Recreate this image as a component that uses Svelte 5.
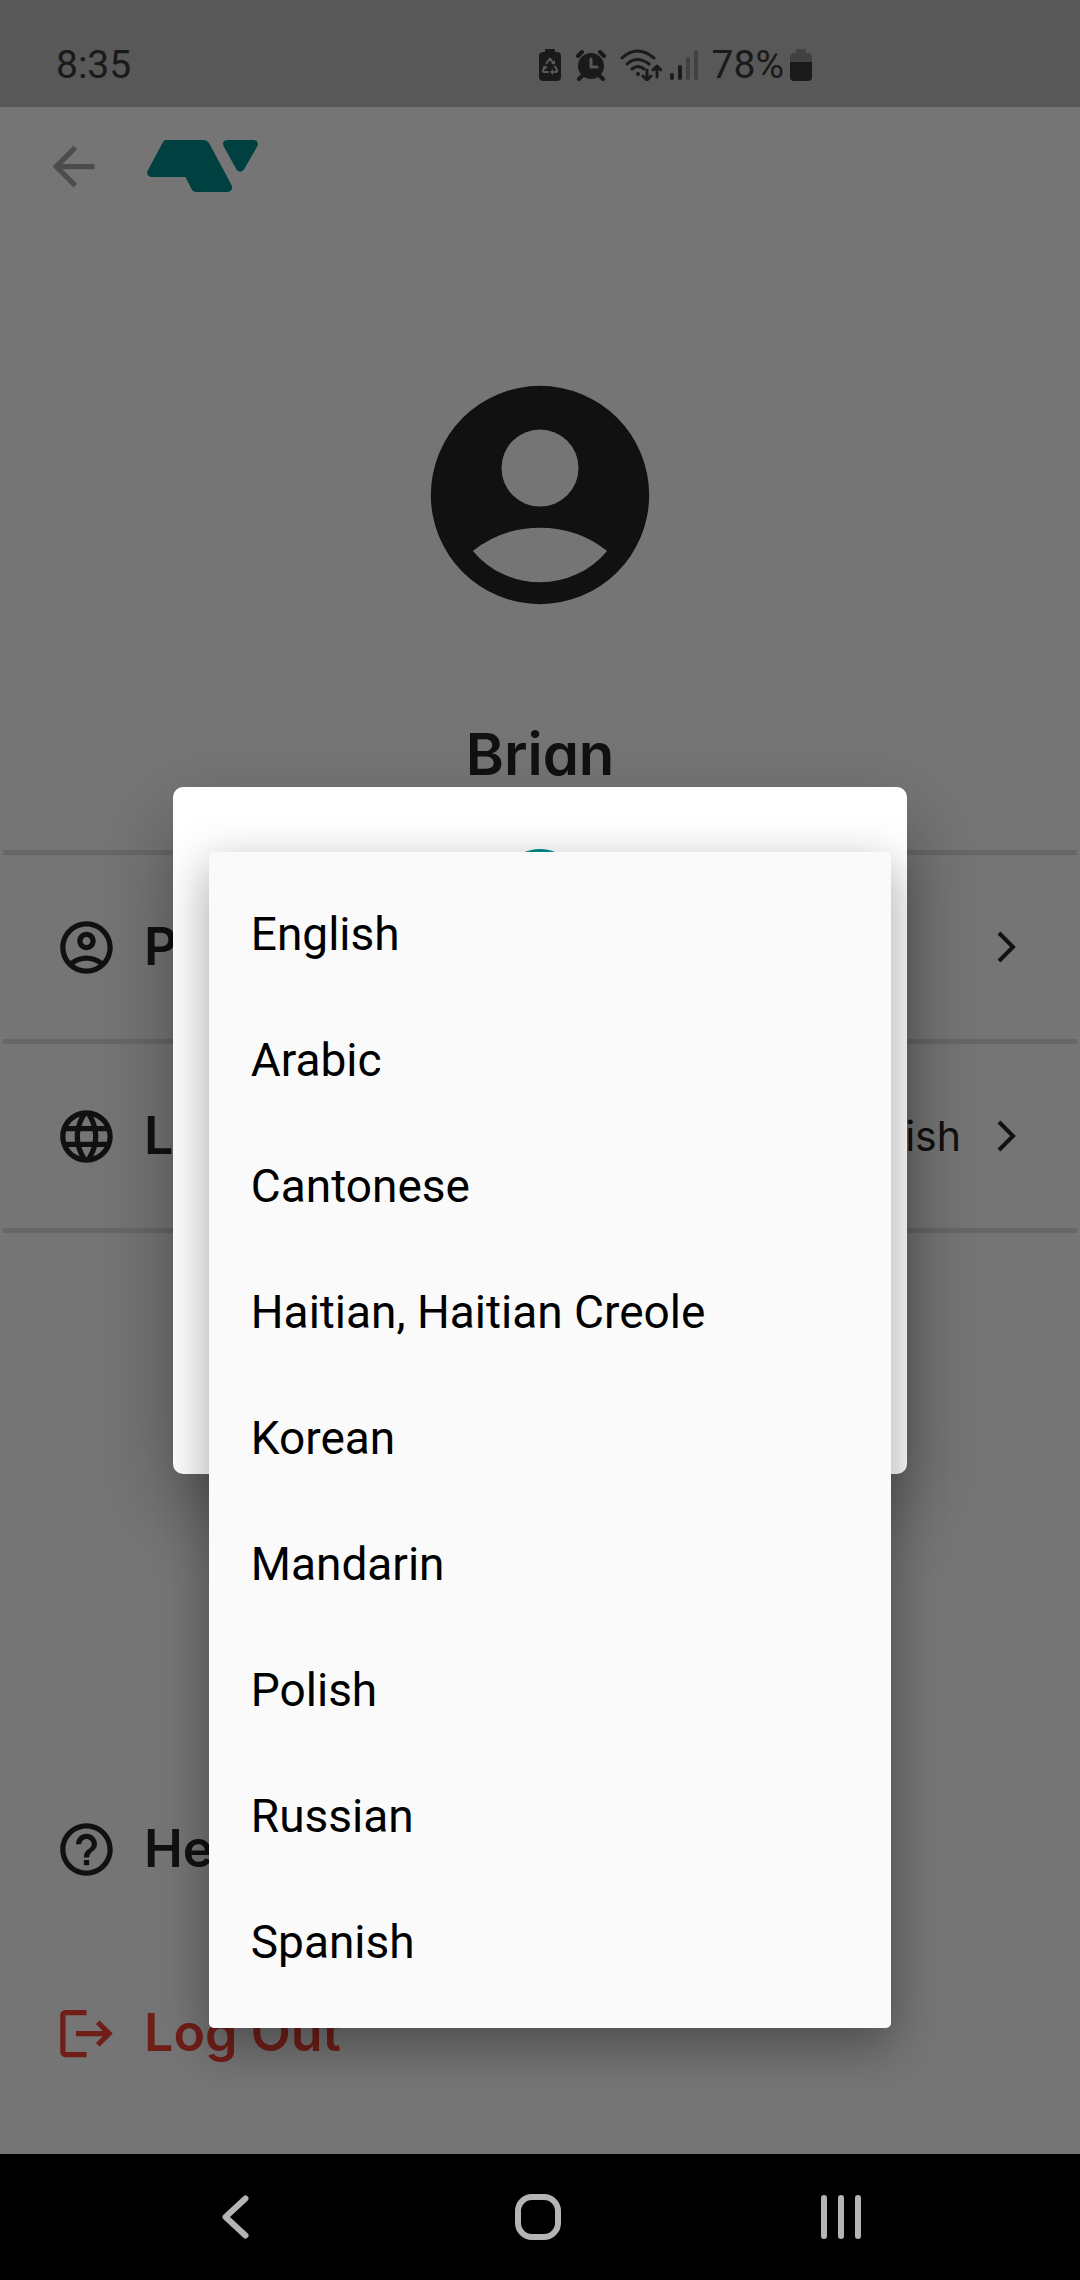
<script lang="ts">
  const languages = [
    'English',
    'Arabic',
    'Cantonese',
    'Haitian, Haitian Creole',
    'Korean',
    'Mandarin',
    'Polish',
    'Russian',
    'Spanish'
  ];

  let selected = $state('English');

  const icons = {
    back: 'M20 11H7.83l5.59-5.59L12 4l-8 8 8 8 1.41-1.41L7.83 13H20v-2z',
    profile:
      'M12 2C6.48 2 2 6.48 2 12s4.48 10 10 10 10-4.48 10-10S17.52 2 12 2zM7.35 18.5C8.66 17.56 10.26 17 12 17s3.34.56 4.65 1.5C15.34 19.44 13.74 20 12 20s-3.34-.56-4.65-1.5zm10.79-1.38C16.45 15.8 14.32 15 12 15s-4.45.8-6.14 2.12C4.7 15.73 4 13.95 4 12c0-4.42 3.58-8 8-8s8 3.58 8 8c0 1.95-.7 3.73-1.86 5.12zM12 6c-1.93 0-3.5 1.57-3.5 3.5S10.07 13 12 13s3.5-1.57 3.5-3.5S13.93 6 12 6zm0 5c-.83 0-1.5-.67-1.5-1.5S11.17 8 12 8s1.5.67 1.5 1.5S12.83 11 12 11z',
    globe:
      'M11.99 2C6.47 2 2 6.48 2 12s4.47 10 9.99 10C17.52 22 22 17.52 22 12S17.52 2 11.99 2zm6.93 6h-2.95c-.32-1.25-.78-2.45-1.38-3.56 1.84.63 3.37 1.91 4.33 3.56zM12 4.04c.83 1.2 1.48 2.53 1.91 3.96h-3.82c.43-1.43 1.08-2.76 1.91-3.96zM4.26 14C4.1 13.36 4 12.69 4 12s.1-1.36.26-2h3.38c-.08.66-.14 1.32-.14 2s.06 1.34.14 2H4.26zm.82 2h2.95c.32 1.25.78 2.45 1.38 3.56-1.84-.63-3.37-1.9-4.33-3.56zm2.95-8H5.08c.96-1.66 2.49-2.93 4.33-3.56C8.81 5.55 8.35 6.75 8.03 8zM12 19.96c-.83-1.2-1.48-2.53-1.91-3.96h3.82c-.43 1.43-1.08 2.76-1.91 3.96zM14.34 14H9.66c-.09-.66-.16-1.32-.16-2s.07-1.35.16-2h4.68c.09.65.16 1.32.16 2s-.07 1.34-.16 2zm.25 5.56c.6-1.11 1.06-2.31 1.38-3.56h2.95c-.96 1.65-2.49 2.93-4.33 3.56zM16.36 14c.08-.66.14-1.32.14-2s-.06-1.34-.14-2h3.38c.16.64.26 1.31.26 2s-.1 1.36-.26 2h-3.38z',
    help:
      'M11 18h2v-2h-2v2zm1-16C6.48 2 2 6.48 2 12s4.48 10 10 10 10-4.48 10-10S17.52 2 12 2zm0 18c-4.41 0-8-3.59-8-8s3.59-8 8-8 8 3.59 8 8-3.59 8-8 8zm0-14c-2.21 0-4 1.79-4 4h2c0-1.1.9-2 2-2s2 .9 2 2c0 2-3 1.75-3 5h2c0-2.25 3-2.5 3-5 0-2.21-1.79-4-4-4z',
    logout:
      'M17 7l-1.41 1.41L18.17 11H8v2h10.17l-2.58 2.58L17 17l5-5zM4 5h8V3H4c-1.1 0-2 .9-2 2v14c0 1.1.9 2 2 2h8v-2H4V5z'
  };
</script>

{#snippet icon(path: string)}
  <svg class="icon" viewBox="0 0 24 24" aria-hidden="true"><path d={path} /></svg>
{/snippet}

{#snippet chevron()}
  <svg class="chevron" viewBox="0 0 20 32" aria-hidden="true"><path d="M2 2l14 14L2 30" /></svg>
{/snippet}

<div class="phone">
  <div class="screen">
    <div class="status-bar">
      <span class="time">8:35</span>
      <div class="status-icons">
        <svg width="24" height="34" viewBox="0 0 24 34">
          <path d="M7 1.5Q7 1 8 1h8q1 0 1 1v2h2q4 0 4 4v21q0 4-4 4H5q-4 0-4-4V8q0-4 4-4h2z" />
          <path class="cut" d="M8.5 15.5l3-4.500q.5-.8 1 0l3 4.500M17 18.500l2 3.500q.5 2-1 2h-4M10 24H6q-1.500 0-1-2l2-3.500" />
          <path class="cut-fill" d="M13 16h4v-4zM15 21v6l-3-3zM5 18l5 1-4 3z" />
        </svg>
        <svg width="30" height="32" viewBox="0 0 30 32">
          <circle cx="15" cy="17" r="13" />
          <path class="line thick" d="M2 7l4-4M28 7l-4-4M6 27l-3 3M24 27l3 3" />
          <path class="cut thick" d="M15 10v8h6" />
        </svg>
        <svg width="42" height="32" viewBox="0 0 42 32">
          <path class="line" d="M2 9q15-14 32 0M7 15q10-9 22 0M12 20q6-5 12 0M27 21v9M23 27l4 4 4-4M37 28v-10M33 21l4-4 4 4" />
          <circle cx="18" cy="25" r="2" />
        </svg>
        <svg class="signal" width="28" height="30" viewBox="0 0 28 30">
          <rect y="23" width="4" height="7" rx="2" />
          <rect x="8" y="15" width="4" height="15" rx="2" />
          <rect class="faint" x="16" y="7" width="4" height="23" rx="2" />
          <rect class="faint" x="24" width="4" height="30" rx="2" />
        </svg>
        <span class="percent">78%</span>
        <svg width="22" height="34" viewBox="0 0 22 34">
          <path class="faint" d="M6 2q0-1 1-1h8q1 0 1 1v3h2q4 0 4 4v5H0V9q0-4 4-4h2z" />
          <path d="M0 14h22v15q0 4-4 4H4q-4 0-4-4z" />
        </svg>
      </div>
    </div>

    <header class="app-bar">
      <button class="back" aria-label="Back">
        {@render icon(icons.back)}
      </button>
      <svg class="logo" viewBox="0 0 111 52" aria-hidden="true">
        <path d="M19 0H57Q60 0 62 3L84.5 45Q86.5 51 81 52H49Q46 52 44.5 49L38.5 37H4Q-1 36 .5 31L16 2Q17 0 19 0Z" />
        <path d="M80 0H107Q112 1 110.5 6L97 29.5Q93 34 89.5 29.5L76.5 6Q74.5 1 80 0Z" />
      </svg>
    </header>

    <section class="account">
      <svg class="avatar" viewBox="0 0 24 24" aria-hidden="true">
        <path fill-rule="evenodd" d="M12 2a10 10 0 1 0 0 20 10 10 0 0 0 0-20zM12 6a3.53 3.53 0 1 1 0 7.06A3.53 3.53 0 0 1 12 6zM12 20a8 8 0 0 1-6.15-2.88A9.95 9.95 0 0 1 12 15a9.95 9.95 0 0 1 6.15 2.12A8 8 0 0 1 12 20z" />
      </svg>
      <h1>Brian</h1>
    </section>

    <nav class="settings">
      <a class="row" href="#profile">
        {@render icon(icons.profile)}
        <span class="label">Profile</span>
        {@render chevron()}
      </a>
      <a class="row" href="#language">
        {@render icon(icons.globe)}
        <span class="label">Language</span>
        <span class="value">{selected}</span>
        {@render chevron()}
      </a>
    </nav>

    <div class="actions">
      <a class="row" href="#help">
        {@render icon(icons.help)}
        <span class="label">Help</span>
      </a>
      <button class="row logout">
        {@render icon(icons.logout)}
        <span class="label">Log Out</span>
      </button>
    </div>

    <div class="scrim">
      <div class="dialog" role="dialog" aria-label="Language">
        <svg class="dialog-icon" viewBox="2 2 20 20" aria-hidden="true"><path d={icons.globe} /></svg>
        <div class="menu" role="listbox" aria-label="Language">
          {#each languages as language}
            <button
              class="option"
              role="option"
              aria-selected={language === selected}
              onclick={() => (selected = language)}
            >
              {language}
            </button>
          {/each}
        </div>
      </div>
    </div>
  </div>

  <div class="nav-bar">
    <button aria-label="Back">
      <svg width="28" height="46" viewBox="0 0 28 46"><path d="M24.5 4.5L4.5 23l20 18.5" /></svg>
    </button>
    <button aria-label="Home">
      <svg width="46" height="46" viewBox="0 0 46 46"><rect x="3" y="3" width="40" height="40" rx="14" /></svg>
    </button>
    <button aria-label="Recent apps">
      <svg width="42" height="46" viewBox="0 0 42 46"><path d="M4 4v38M21 4v38M38 4v38" /></svg>
    </button>
  </div>
</div>

<style>
  :global(body) { margin: 0; }

  .phone {
    display: flex;
    flex-direction: column;
    min-height: 100vh;
    background: #fff;
    color: #252525;
    font-family: Inter, 'Open Sans', sans-serif;
    font-feature-settings: 'cv11';
  }

  button {
    border: 0;
    padding: 0;
    background: none;
    font: inherit;
    color: inherit;
    cursor: pointer;
  }

  svg { flex: none; fill: currentColor; }
  .icon { width: 63px; height: 63px; display: block; }

  .screen {
    position: relative;
    flex: 1;
    display: flex;
    flex-direction: column;
  }

  .status-bar {
    box-sizing: border-box;
    height: 107px;
    padding: 23px 268px 0 56px;
    display: flex;
    align-items: center;
    justify-content: space-between;
    background: #bfbfbf;
    color: #3a3a3a;
    font-family: Roboto, sans-serif;
    font-size: 39px;
    line-height: 48px;
  }
  .status-icons { display: flex; align-items: center; gap: 14px; }
  .signal { margin-left: -6px; }
  .percent { margin-right: -8px; }
  .line, .cut { fill: none; stroke: currentColor; stroke-width: 3; stroke-linecap: round; stroke-linejoin: round; }
  .cut { stroke: #bfbfbf; stroke-width: 2; }
  .thick { stroke-width: 4; }
  .cut.thick { stroke-width: 3; }
  .cut-fill { fill: #bfbfbf; }
  .faint { fill: #8e8e8e; }

  .app-bar {
    height: 118px;
    padding: 0 42px;
    display: flex;
    align-items: center;
    gap: 42px;
  }
  .back { color: #a6a6a6; }
  .logo { width: 111px; height: 52px; color: #008b8b; }

  .account {
    padding: 139px 0 61px;
    display: flex;
    flex-direction: column;
    align-items: center;
    gap: 93px;
  }
  .avatar { width: 262px; height: 262px; }
  h1 { margin: 0; font-size: 58px; line-height: 70px; font-weight: 600; }

  .settings { margin: 0 3px; border-top: 5px solid #e0e0e0; }
  .settings .row { border-bottom: 5px solid #e0e0e0; padding: 0 60px 0 52px; }

  .row {
    height: 184px;
    display: flex;
    align-items: center;
    color: inherit;
    text-decoration: none;
    text-align: left;
  }
  .label {
    flex: 1;
    margin-left: 26px;
    font-size: 52px;
    line-height: 64px;
    font-weight: 600;
  }
  .value { margin-right: 36px; font-size: 41px; line-height: 48px; }
  .chevron { width: 20px; height: 32px; fill: none; stroke: currentColor; stroke-width: 4; }

  .actions {
    margin-top: auto;
    padding: 0 55px 29px;
    display: flex;
    flex-direction: column;
  }
  .logout { color: #f44336; }

  .scrim {
    position: absolute;
    inset: 0;
    padding-top: 107px;
    display: flex;
    align-items: center;
    justify-content: center;
    background: rgba(0, 0, 0, 0.54);
  }

  .dialog {
    position: relative;
    box-sizing: border-box;
    width: 68%;
    min-height: 687px;
    padding-top: 62px;
    display: flex;
    flex-direction: column;
    align-items: center;
    background: #fff;
    border-radius: 10px;
    box-shadow: 0 34px 80px rgba(0, 0, 0, 0.3);
  }
  .dialog-icon { width: 78px; height: 78px; color: #008b8b; }

  .menu {
    position: absolute;
    top: 65px;
    left: 36px;
    right: 16px;
    padding: 19px 0 23px;
    display: flex;
    flex-direction: column;
    background: #fafafa;
    border-radius: 5px;
    box-shadow: 0 16px 48px 2px rgba(0, 0, 0, 0.34);
  }
  .option {
    height: 126px;
    padding: 0 42px;
    color: #000;
    font-family: Roboto, sans-serif;
    font-size: 46px;
    line-height: 56px;
    text-align: left;
  }

  .nav-bar {
    height: 126px;
    padding: 0 88px 0 84px;
    display: grid;
    grid-template-columns: repeat(3, 1fr);
    background: #000;
    color: #b4b4b4;
  }
  .nav-bar button { display: flex; align-items: center; justify-content: center; }
  .nav-bar svg { fill: none; stroke: currentColor; stroke-width: 6; stroke-linecap: round; stroke-linejoin: round; }
</style>
